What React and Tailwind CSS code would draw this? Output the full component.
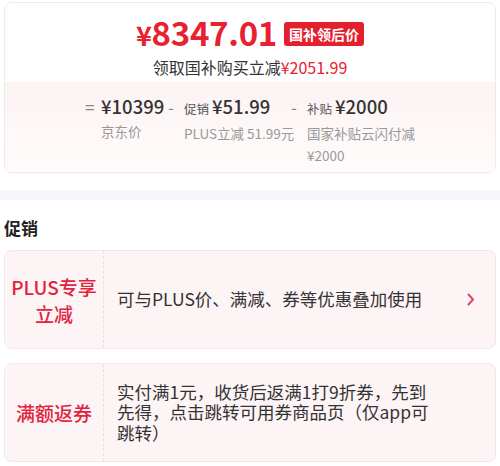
const RED = 'text-[#e8202f]';

function PriceCol({ sign, label, value, sub, className }) {
  return (
    <div className={`flex flex-col ${className || ''}`}>
      <div className="flex items-baseline leading-[26px]">
        <span className="w-[16px] text-[17px] text-[#888]">{sign}</span>
        {label && <span className="mr-[3px] text-[12.5px] text-[#555]">{label}</span>}
        <span className="text-[18.5px] font-medium text-[#333]">{value}</span>
      </div>
      <div className="whitespace-nowrap pl-[16px] text-[13.5px] leading-[22px] text-[#999]">{sub}</div>
    </div>
  );
}

function PromoCard({ title, children, arrow }) {
  return (
    <div className="flex min-h-[99px] rounded-lg border border-[#f6e6e8] bg-[#fdf4f5]">
      <div className="flex w-[99px] shrink-0 items-center justify-center border-r border-dashed border-[#eedede] text-center text-[19px] font-medium leading-[27px] text-[#e2233f]">
        {title}
      </div>
      <div className="flex flex-1 items-center pl-[13px] pr-[20px]">
        <div className="flex-1 text-[17.5px] leading-[20.5px] text-[#333]">{children}</div>
        {arrow && (
          <svg width="8" height="13" viewBox="0 0 8 13" className="ml-2 shrink-0">
            <path d="M1.5 1.5 L6 6.5 L1.5 11.5" fill="none" stroke="#e2475e" strokeWidth="2" strokeLinecap="round" strokeLinejoin="round" />
          </svg>
        )}
      </div>
    </div>
  );
}

export default function App() {
  return (
    <div className="min-h-[466px] bg-white pt-[2px] font-['Noto_Sans_CJK_SC',sans-serif]">
      <div className="mx-1 overflow-hidden rounded-lg border border-[#f1e8e9] shadow-[0_1px_2px_rgba(0,0,0,0.03)]">
        <div className="flex flex-col items-center bg-white pt-[8px] pb-[4px]">
          <div className="flex items-center">
            <span className={`text-[33px] font-bold leading-[42px] tracking-[-0.3px] ${RED}`}>
              <span className="text-[27px]">¥</span>8347.01
            </span>
            <span className="ml-[7px] rounded-[3px] bg-[#e4202e] px-[5px] text-[14px] font-bold leading-[24px] text-white">
              国补领后价
            </span>
          </div>
          <div className="text-[16px] leading-[22px] text-[#333]">
            领取国补购买立减<span className={RED}>¥2051.99</span>
          </div>
        </div>
        <div className="flex bg-gradient-to-b from-[#fcf3f3] to-[#fffbfb] pt-[11px] pb-[6px] pl-[80px]">
          <PriceCol sign="=" value="¥10399" sub="京东价" className="w-[83px]" />
          <PriceCol sign="-" label="促销" value="¥51.99" sub="PLUS立减 51.99元" className="w-[123px]" />
          <PriceCol
            sign="-"
            label="补贴"
            value="¥2000"
            sub={<>国家补贴云闪付减<br />¥2000</>}
          />
        </div>
      </div>

      <div className="mt-[17px] h-[10px] bg-[#f6f7fb]" />

      <div className="px-1">
        <div className="pt-[16px] pb-[10px] text-[17px] font-bold leading-[24px] text-[#222]">促销</div>
        <PromoCard title={<>PLUS专享<br />立减</>} arrow>
          可与PLUS价、满减、券等优惠叠加使用
        </PromoCard>
        <div className="mt-[14px]">
          <PromoCard title="满额返券">
            <div className="w-[318px]">实付满1元，收货后返满1打9折券，先到先得，点击跳转可用券商品页（仅app可跳转）</div>
          </PromoCard>
        </div>
      </div>
    </div>
  );
}
